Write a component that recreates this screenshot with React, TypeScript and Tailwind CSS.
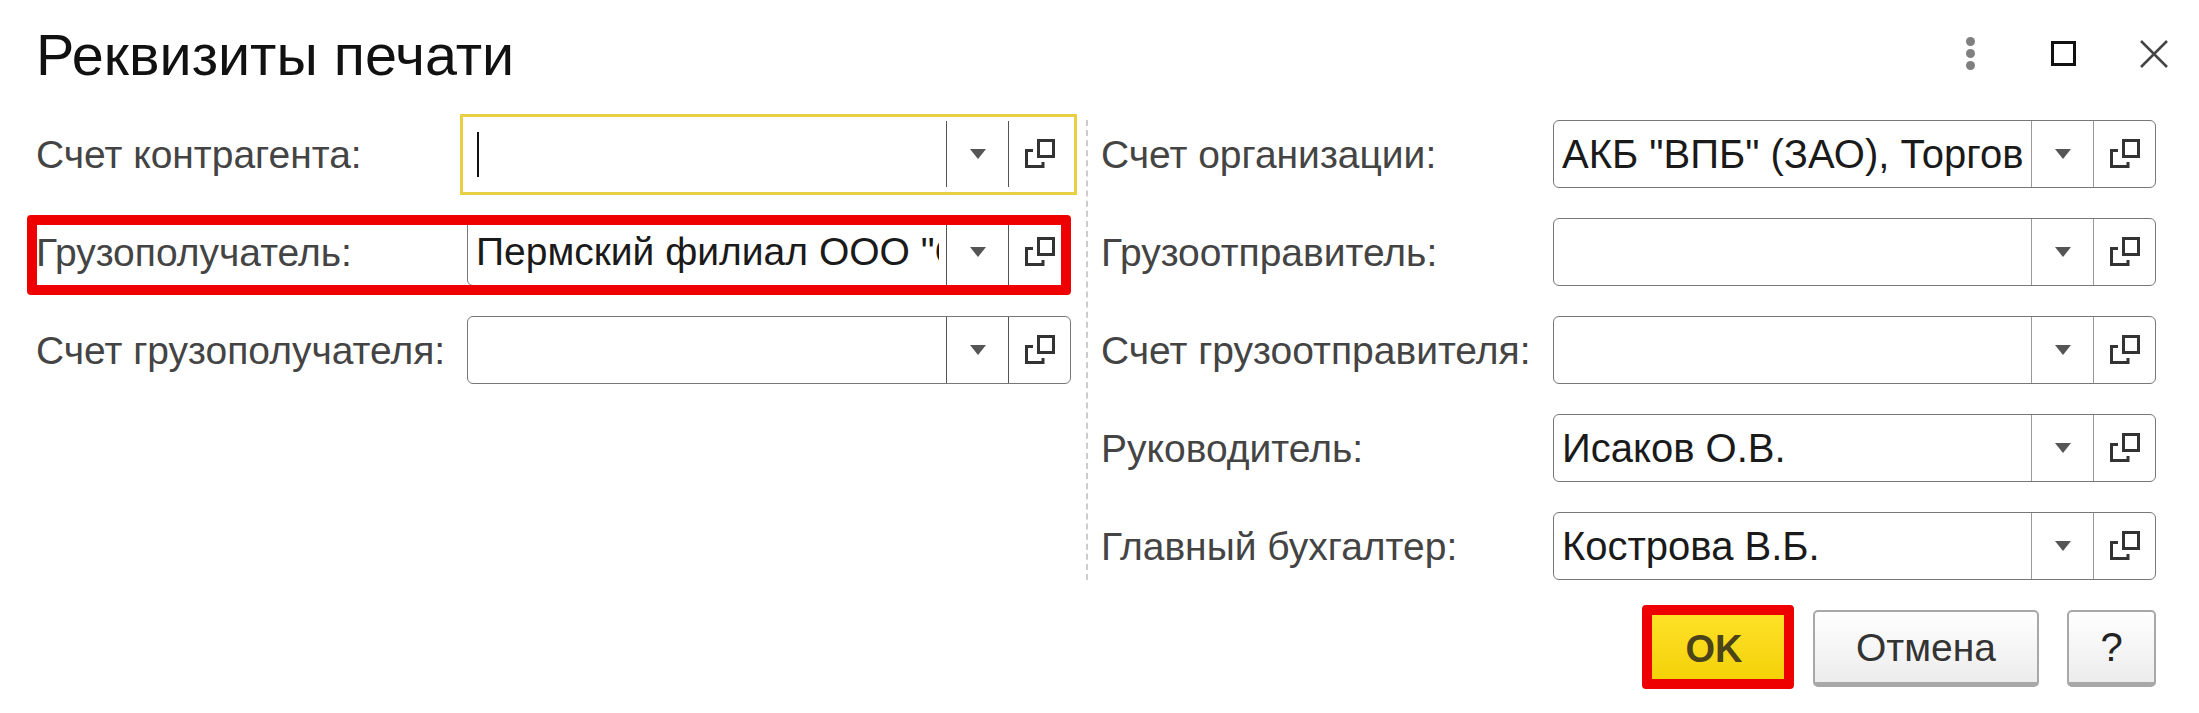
function OpenIcon() {
  return (
    <svg width="32" height="30" viewBox="0 0 32 30" fill="none" stroke="#333" strokeWidth="3">
      <rect x="14.5" y="1.5" width="15" height="16" />
      <path d="M9 11.5H2.5V27.5H19V23" />
    </svg>
  );
}

function Field({
  value,
  focused = false,
  sep = 'border-[#777]',
  size = 'text-[40px]',
}: {
  value?: string;
  focused?: boolean;
  sep?: string;
  size?: string;
}) {
  return (
    <div className={`relative flex h-[68px] min-w-0 flex-1 rounded-[6px] border ${focused ? 'border-transparent' : 'border-[#777]'}`}>
      {focused && <div className="absolute -top-[7px] -bottom-[8px] -left-[8px] -right-[7px] border-[3px] border-[#e8cf45]" />}
      <div className="relative flex min-w-0 flex-1 items-center pl-[8px] pr-[7px]">
        {focused && <div className="ml-[1px] h-[45px] w-[2px] bg-[#111]" />}
        {value && <span className={`block min-w-0 flex-1 overflow-hidden whitespace-nowrap leading-[48px] text-[#1a1a1a] ${size}`}>{value}</span>}
      </div>
      <div className={`flex w-[62px] shrink-0 items-center justify-center border-l ${sep}`}>
        <svg width="16" height="10" viewBox="0 0 16 10">
          <path d="M0 0H16L8 10Z" fill="#555" />
        </svg>
      </div>
      <div className={`flex w-[62px] shrink-0 items-center justify-center border-l ${sep}`}>
        <OpenIcon />
      </div>
    </div>
  );
}

function Row({ label, labelWidth, children }: { label: string; labelWidth: string; children: React.ReactNode }) {
  return (
    <div className="relative flex items-center">
      <div className={`${labelWidth} shrink-0 whitespace-nowrap text-[#444]`}>{label}</div>
      {children}
    </div>
  );
}

export default function App() {
  return (
    <div className="flex h-[713px] w-[2199px] flex-col overflow-hidden bg-white font-['Liberation_Sans',Arial,sans-serif] text-[39px] leading-none">
      {/* Title bar */}
      <div className="flex h-[120px] items-start justify-between pl-[36px] pr-[31px]">
        <h1 className="mt-[27px] text-[57.5px] leading-none font-normal text-[#111]">Реквизиты печати</h1>
        <div className="mt-[37px] flex items-center">
          <div className="flex flex-col gap-[3px]">
            <span className="h-[9px] w-[9px] rounded-full bg-[#808080]" />
            <span className="h-[9px] w-[9px] rounded-full bg-[#808080]" />
            <span className="h-[9px] w-[9px] rounded-full bg-[#808080]" />
          </div>
          <div className="ml-[76px] h-[25px] w-[25px] border-[3px] border-[#111]" />
          <svg className="ml-[64px]" width="28" height="28" viewBox="0 0 28 28" stroke="#444" strokeWidth="2.5">
            <path d="M1 1L27 27M27 1L1 27" />
          </svg>
        </div>
      </div>

      {/* Form columns */}
      <div className="flex items-start">
        <div className="flex w-[1086px] flex-col gap-[30px] pl-[36px] pr-[15px]">
          <Row label="Счет контрагента:" labelWidth="w-[431px]">
            <Field focused sep="border-[#555]" />
          </Row>
          <Row label="Грузополучатель:" labelWidth="w-[431px]">
            <Field value={'Пермский филиал ООО "Север"'} sep="border-[#555]" size="text-[39px]" />
            <div className="absolute -top-[3px] -bottom-[9px] -left-[9px] right-0 rounded-[4px] border-[10px] border-[#ee0000]" />
          </Row>
          <Row label="Счет грузополучателя:" labelWidth="w-[431px]">
            <Field sep="border-[#555]" />
          </Row>
        </div>
        <div className="flex h-[460px] min-w-0 flex-1 flex-col gap-[30px] border-l-2 border-dashed border-[#ccc] pl-[13px] pr-[43px]">
          <Row label="Счет организации:" labelWidth="w-[452px]">
            <Field value={'АКБ "ВПБ" (ЗАО), Торговый счет'} sep="border-[#999]" />
          </Row>
          <Row label="Грузоотправитель:" labelWidth="w-[452px]">
            <Field sep="border-[#999]" />
          </Row>
          <Row label="Счет грузоотправителя:" labelWidth="w-[452px]">
            <Field sep="border-[#999]" />
          </Row>
          <Row label="Руководитель:" labelWidth="w-[452px]">
            <Field value="Исаков О.В." sep="border-[#999]" />
          </Row>
          <Row label="Главный бухгалтер:" labelWidth="w-[452px]">
            <Field value="Кострова В.Б." sep="border-[#999]" />
          </Row>
        </div>
      </div>

      {/* Buttons */}
      <div className="mt-[30px] flex justify-end gap-[28px] pr-[43px]">
        <button className="relative h-[77px] w-[134px] border-r border-[#b89a20] bg-gradient-to-b from-[#ffe227] to-[#f2d000] pr-[7px] text-[38px] font-bold text-[#4a4418]">
          OK
          <span className="absolute -top-[5px] -bottom-[2px] -left-[9px] -right-[10px] rounded-[4px] border-[10px] border-[#ee0000]" />
        </button>
        <button className="h-[77px] w-[226px] rounded-[5px] border-2 border-b-[5px] border-[#a8a8a8] bg-gradient-to-b from-white to-[#ececec] text-[39px] text-[#333]">
          Отмена
        </button>
        <button className="h-[77px] w-[89px] rounded-[5px] border-2 border-b-[5px] border-[#a8a8a8] bg-gradient-to-b from-white to-[#ececec] text-[40px] text-[#222]">
          ?
        </button>
      </div>
    </div>
  );
}
